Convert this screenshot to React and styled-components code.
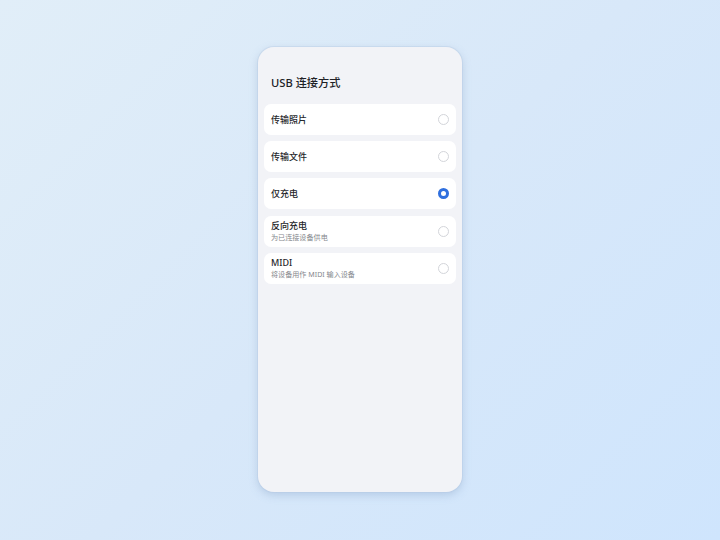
import React, { useState } from "react";
import styled, { createGlobalStyle } from "styled-components";

const GlobalStyle = createGlobalStyle`
  html, body { margin: 0; padding: 0; }
  body {
    font-family: "Noto Sans", "Noto Sans CJK SC", sans-serif;
    background: linear-gradient(135deg, #e1eef8 0%, #d8e8f9 50%, #cfe5fd 100%);
    min-height: 540px;
  }
`;

const Stage = styled.div`
  width: 720px;
  height: 540px;
  display: flex;
  justify-content: center;
  padding-top: 47px;
  box-sizing: border-box;
`;

const Phone = styled.div`
  width: 204px;
  height: 445px;
  border-radius: 16px;
  background: #f2f3f7;
  box-shadow: 0 0 0 1px rgba(180, 200, 225, 0.35), 0 3px 8px rgba(120, 150, 190, 0.35);
  padding: 28px 6px 0;
  box-sizing: border-box;
  display: flex;
  flex-direction: column;
`;

const Title = styled.h1`
  margin: 0 0 13px 7px;
  font-size: 11.2px;
  font-weight: 500;
  color: #202125;
  line-height: 16px;
  font-family: "Noto Sans", "Noto Sans CJK SC", sans-serif;
`;

const List = styled.div`
  display: flex;
  flex-direction: column;
  gap: 6.2px;
`;

const Row = styled.label`
  height: 31px;
  border-radius: 7px;
  background: #ffffff;
  display: flex;
  align-items: center;
  justify-content: space-between;
  padding: 0 7px;
  box-sizing: border-box;
  cursor: pointer;
`;

const Texts = styled.div`
  display: flex;
  flex-direction: column;
`;

const Label = styled.span`
  font-size: 9px;
  font-weight: 500;
  color: #26272b;
  line-height: 12px;
`;

const Sub = styled.span`
  font-size: 7.1px;
  color: #85878d;
  line-height: 10px;
`;

const Radio = styled.span`
  width: 11px;
  height: 11px;
  border-radius: 50%;
  box-sizing: border-box;
  border: ${(p) => (p.$on ? "3px solid #2f6fde" : "1px solid #d3d5da")};
  background: #fff;
`;

const options = [
  { id: "photo", label: "传输照片" },
  { id: "file", label: "传输文件" },
  { id: "charge", label: "仅充电" },
  { id: "reverse", label: "反向充电", sub: "为已连接设备供电" },
  { id: "midi", label: "MIDI", sub: "将设备用作 MIDI 输入设备" },
];

export default function App() {
  const [mode, setMode] = useState("charge");
  return (
    <>
      <GlobalStyle />
      <Stage>
        <Phone>
          <Title>USB 连接方式</Title>
          <List>
            {options.map((o) => (
              <Row key={o.id} onClick={() => setMode(o.id)}>
                <Texts>
                  <Label>{o.label}</Label>
                  {o.sub && <Sub>{o.sub}</Sub>}
                </Texts>
                <Radio $on={mode === o.id} />
              </Row>
            ))}
          </List>
        </Phone>
      </Stage>
    </>
  );
}
